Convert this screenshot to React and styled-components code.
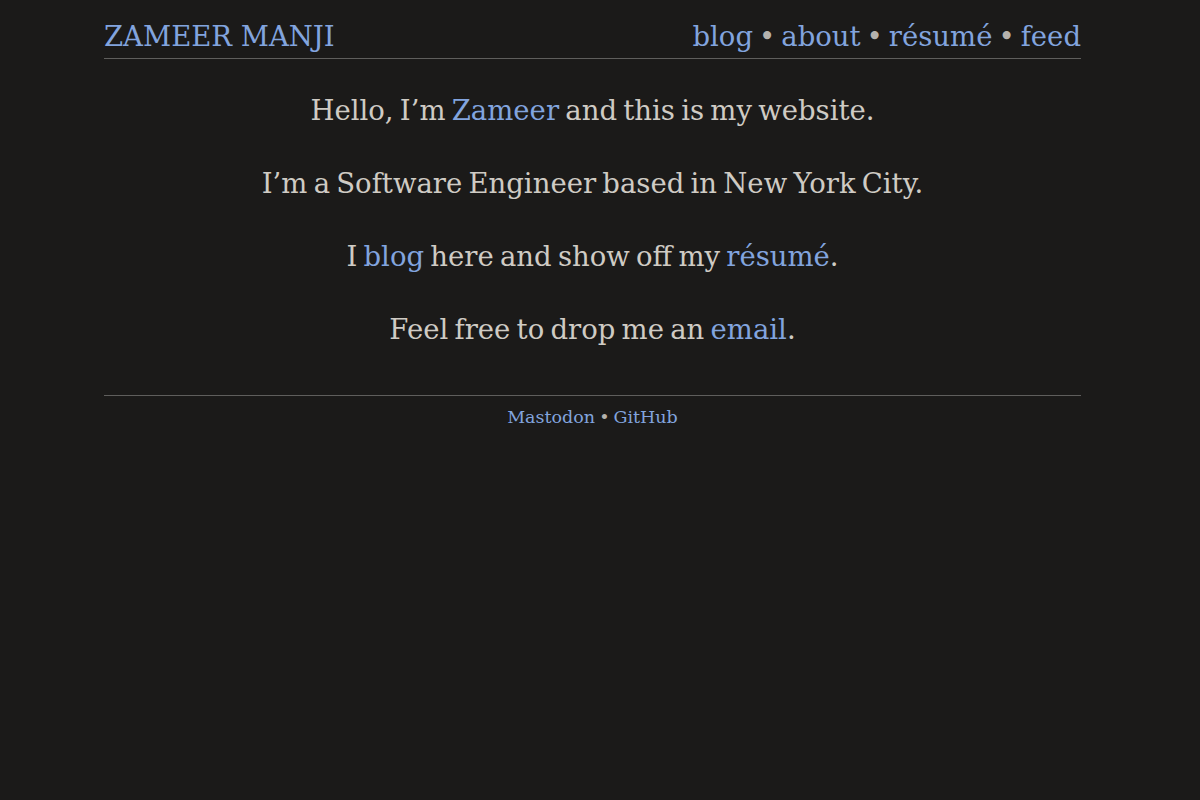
import React from 'react';
import styled, { createGlobalStyle } from 'styled-components';

const GlobalStyle = createGlobalStyle`
  html, body {
    margin: 0;
    padding: 0;
    background: #1b1a19;
    color: #cfcbc4;
    font-family: "DejaVu Serif", "Liberation Serif", serif;
  }
`;

const Page = styled.div`
  width: 977px;
  margin: 0 119px 0 104px;
`;

const Header = styled.header`
  display: flex;
  justify-content: space-between;
  align-items: baseline;
  padding-top: 17px;
  padding-bottom: 3px;
  border-bottom: 1px solid #5f5e5c;
  font-size: 27.5px;
  line-height: 38px;
`;

const Link = styled.a`
  color: #82a4de;
  text-decoration: none;
`;

const Nav = styled.nav`
  display: flex;
  align-items: baseline;
`;

const Dot = styled.span`
  color: #b5b2ad;
  margin: 0 ${({ small }) => (small ? '4px' : '6px')};
`;

const Main = styled.main`
  text-align: center;
  padding: 31px 0 46px;
  border-bottom: 1px solid #5f5e5c;
`;

const Para = styled.p`
  margin: 0 0 33px;
  font-size: 27.5px;
  line-height: 40px;
  word-spacing: -2.5px;
  &:last-child {
    margin-bottom: 0;
  }
`;

const Footer = styled.footer`
  text-align: center;
  padding-top: 8px;
  font-size: 17.5px;
  line-height: 26px;
`;

const navItems = ['blog', 'about', 'résumé', 'feed'];

export default function App() {
  return (
    <>
      <GlobalStyle />
      <Page>
        <Header>
          <Link href="#">ZAMEER MANJI</Link>
          <Nav>
            {navItems.map((item, i) => (
              <React.Fragment key={item}>
                {i > 0 && <Dot>•</Dot>}
                <Link href="#">{item}</Link>
              </React.Fragment>
            ))}
          </Nav>
        </Header>
        <Main>
          <Para>Hello, I’m <Link href="#">Zameer</Link> and this is my website.</Para>
          <Para>I’m a Software Engineer based in New York City.</Para>
          <Para>I <Link href="#">blog</Link> here and show off my <Link href="#">résumé</Link>.</Para>
          <Para>Feel free to drop me an <Link href="#">email</Link>.</Para>
        </Main>
        <Footer>
          <Link href="#">Mastodon</Link>
          <Dot small>•</Dot>
          <Link href="#">GitHub</Link>
        </Footer>
      </Page>
    </>
  );
}
